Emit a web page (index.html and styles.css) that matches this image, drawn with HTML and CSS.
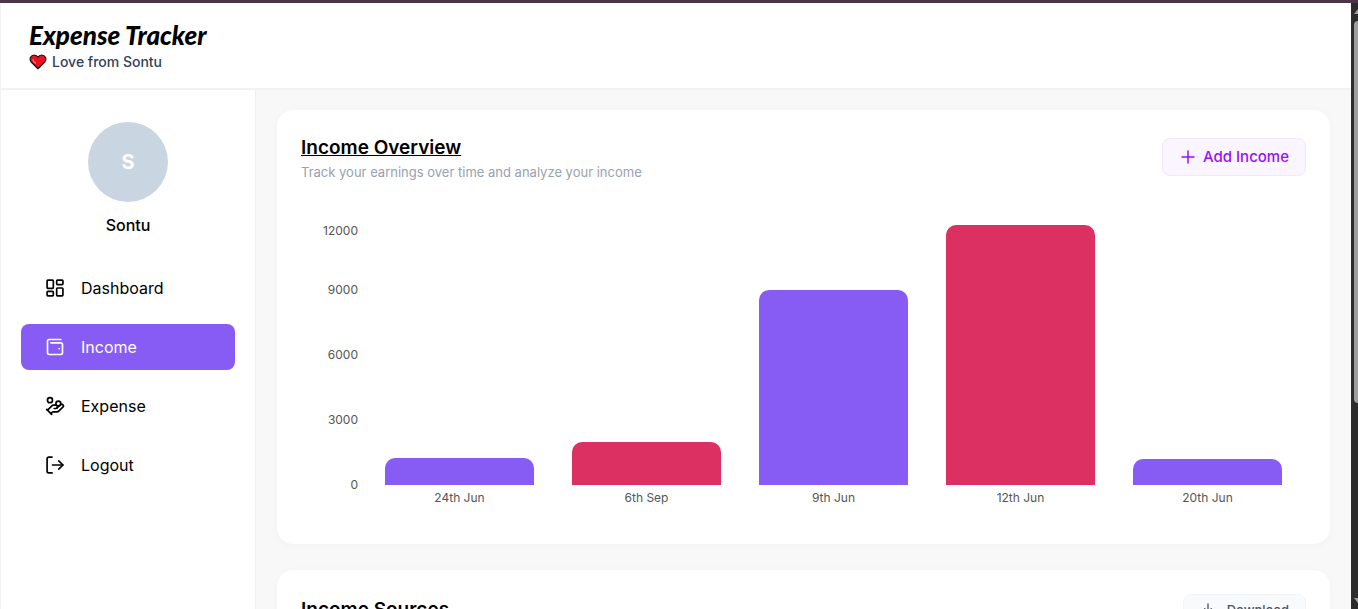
FILE: index.html
```html
<!DOCTYPE html>
<html lang="en">
<head>
<meta charset="utf-8">
<meta name="viewport" content="width=device-width, initial-scale=1">
<title>Expense Tracker</title>
<link rel="stylesheet" href="styles.css">
</head>
<body>
<div class="window">
  <div class="app">
    <header class="topbar">
      <h1 class="brand">Expense Tracker</h1>
      <p class="tagline">
        <svg class="heart" viewBox="0 0 17 16" aria-hidden="true"><path d="M8.500 14.700 1.700 8C-.7 4.700 1.500 1 4.700 1c1.700 0 3 .8 3.800 2.300C9.300 1.800 10.600 1 12.300 1c3.200 0 5.400 3.700 3 7z" fill="#e81224" stroke="#111" stroke-width="1.200" stroke-linejoin="round"/><path d="M3.300 5.200c.2 2 1.500 3.300 3 4.300" fill="none" stroke="#ff7a6b" stroke-width="1.300"/></svg>
        <span>Love from Sontu</span>
      </p>
    </header>
    <div class="body">
      <aside class="sidebar">
        <div class="avatar">S</div>
        <p class="user">Sontu</p>
        <nav class="nav">
          <a class="nav-item" href="#dashboard">
            <svg class="icon" viewBox="0 0 24 24" aria-hidden="true"><rect x="2.500" y="2.500" width="7.500" height="10" rx="1"/><rect x="14" y="2.500" width="7.500" height="5.500" rx="1"/><rect x="14" y="12" width="7.500" height="9.500" rx="1"/><rect x="2.500" y="16" width="7.500" height="5.500" rx="1"/></svg>
            Dashboard</a>
          <a class="nav-item active" href="#income" aria-current="page">
            <svg class="icon" viewBox="0 0 24 24" aria-hidden="true"><path d="M17 14h.01"/><path d="M7 7h12a2 2 0 0 1 2 2v10a2 2 0 0 1-2 2H5a2 2 0 0 1-2-2V5a2 2 0 0 1 2-2h14"/></svg>
            Income</a>
          <a class="nav-item" href="#expense">
            <svg class="icon" viewBox="0 0 24 24" aria-hidden="true"><path d="M11 15h2a2 2 0 1 0 0-4h-3c-.6 0-1.100.2-1.400.6L3 17"/><path d="m7 21 1.600-1.400c.3-.4.8-.6 1.400-.6h4c1.100 0 2.100-.4 2.800-1.200l4.600-4.400a2 2 0 0 0-2.750-2.910l-4.200 3.900"/><path d="m2 16 6 6"/><circle cx="16" cy="9" r="2.900"/><circle cx="6" cy="5" r="3"/></svg>
            Expense</a>
          <a class="nav-item" href="#logout">
            <svg class="icon" viewBox="0 0 24 24" aria-hidden="true"><path d="M8.500 21.500H4.500a2 2 0 0 1-2-2v-15a2 2 0 0 1 2-2h4"/><path d="m16.500 17 5-5-5-5"/><path d="M21.500 12H9"/></svg>
            Logout</a>
        </nav>
      </aside>
      <main class="content">
        <section class="card">
          <div class="card-head">
            <div>
              <h2 class="card-title underlined">Income Overview</h2>
              <p class="card-note">Track your earnings over time and analyze your income</p>
            </div>
            <button class="btn btn-add" type="button">
              <svg class="btn-icon" viewBox="0 0 24 24" aria-hidden="true"><path d="M4 12h16M12 4v16"/></svg>
              Add Income</button>
          </div>
          <div class="chart">
            <div class="y-axis"><span>12000</span><span>9000</span><span>6000</span><span>3000</span><span>0</span></div>
            <div class="plot">
              <div class="bars">
                <div class="bar" style="height:10.4%"></div>
                <div class="bar alt" style="height:16.7%"></div>
                <div class="bar" style="height:75%"></div>
                <div class="bar alt" style="height:100%"></div>
                <div class="bar" style="height:10%"></div>
              </div>
              <div class="x-axis"><span>24th Jun</span><span>6th Sep</span><span>9th Jun</span><span>12th Jun</span><span>20th Jun</span></div>
            </div>
          </div>
        </section>
        <section class="card">
          <div class="card-head centered">
            <h2 class="card-title">Income Sources</h2>
            <button class="btn btn-download" type="button">
              <svg class="btn-icon" viewBox="0 0 24 24" aria-hidden="true"><path d="M21 15v4a2 2 0 0 1-2 2H5a2 2 0 0 1-2-2v-4M7 10l5 5 5-5M12 15V3"/></svg>
              Download</button>
          </div>
        </section>
      </main>
    </div>
  </div>
  <div class="scrollbar" aria-hidden="true">
    <span class="arrow up"></span>
    <span class="thumb"></span>
    <span class="arrow down"></span>
  </div>
</div>
</body>
</html>
```
FILE: styles.css
```css
* { box-sizing: border-box; }

body {
  margin: 0;
  font-family: Inter, "Open Sans", sans-serif;
  color: #000;
  background: #fff;
}

h1, h2, p { margin: 0; }

.window {
  display: flex;
  height: 100vh;
  overflow: hidden;
  border-top: 3px solid #4b3546;
}

.app {
  flex: 1;
  min-width: 0;
  display: flex;
  flex-direction: column;
  border-left: 1px solid #f2f2f2;
}

.topbar {
  padding: 16px 28px;
  border-bottom: 2px solid #f2f2f2;
}

.brand {
  font-family: Lato, sans-serif;
  font-size: 26px;
  font-weight: 900;
  font-style: italic;
  line-height: 33px;
}

.tagline {
  display: flex;
  align-items: center;
  gap: 5px;
  font-size: 14px;
  font-weight: 500;
  line-height: 20px;
  color: #314158;
}

.heart { width: 18px; height: 16px; }

.body {
  flex: 1;
  min-height: 0;
  display: flex;
}

.sidebar {
  flex: none;
  width: 255px;
  padding: 32px 20px 20px;
  border-right: 1px solid #f0f0f0;
}

.avatar {
  display: grid;
  place-items: center;
  width: 80px;
  height: 80px;
  margin: 0 auto;
  border-radius: 50%;
  background: #cad5e2;
  color: #fff;
  font-size: 20px;
  font-weight: 700;
}

.user {
  margin: 11px 0 28px;
  text-align: center;
  font-size: 16px;
  font-weight: 500;
  line-height: 24px;
}

.nav {
  display: flex;
  flex-direction: column;
  gap: 13px;
}

.nav-item {
  display: flex;
  align-items: center;
  gap: 16px;
  padding: 11px 24px;
  border-radius: 8px;
  color: #000;
  font-size: 16px;
  line-height: 24px;
  text-decoration: none;
}

.nav-item.active { background: #875cf5; color: #fff; }

.icon, .btn-icon {
  flex: none;
  fill: none;
  stroke: currentColor;
  stroke-width: 2;
  stroke-linecap: round;
  stroke-linejoin: round;
}

.icon { width: 20px; height: 20px; }

.content {
  flex: 1;
  min-width: 0;
  padding: 20px 21px 0;
  background: #f8f8f8;
  overflow: hidden;
}

.card {
  margin-bottom: 26px;
  padding: 24px 24px 36px;
  border-radius: 16px;
  background: #fff;
  box-shadow: 0 1px 6px #f0f1f4;
}

.card-head {
  display: flex;
  justify-content: space-between;
  align-items: flex-start;
}

.card-head.centered { align-items: center; }

.card-title {
  font-size: 19px;
  font-weight: 600;
  line-height: 28px;
}

.underlined { text-decoration: underline; }

.card-note {
  font-size: 13px;
  line-height: 20px;
  color: #99a1af;
}

.btn {
  display: flex;
  align-items: center;
  padding: 8px 16px;
  border: 1px solid;
  border-radius: 8px;
  font-family: inherit;
  font-weight: 500;
  line-height: 20px;
}

.btn-icon { width: 18px; height: 18px; }

.btn-add {
  gap: 6px;
  margin-top: 4px;
  border-color: #f3e8ff;
  background: #faf5ff;
  color: #9810fa;
  font-size: 15px;
}

.btn-download {
  gap: 11px;
  padding: 5px 16px;
  border-color: #f1f5f9;
  background: #f9fafb;
  color: #4a5565;
  font-size: 13px;
}

.btn-download .btn-icon { width: 16px; height: 16px; }

.chart {
  display: flex;
  gap: 8px;
  margin-top: 43px;
  padding-right: 5px;
  font-size: 12px;
  color: #555;
}

.y-axis {
  display: grid;
  grid-template-rows: 12px 59px 65px 65px 65px;
  align-items: end;
  width: 57px;
  line-height: 12px;
  text-align: right;
}

.plot { flex: 1; }

.bars {
  display: grid;
  grid-template-columns: repeat(5, 1fr);
  align-items: end;
  height: 260px;
}

.bar {
  width: 80%;
  margin: 0 auto;
  border-radius: 10px 10px 0 0;
  background: #875cf5;
}

.bar.alt { background: #dd3062; }

.x-axis {
  display: grid;
  grid-template-columns: repeat(5, 1fr);
  padding-top: 3px;
  line-height: 20px;
  text-align: center;
}

.scrollbar {
  flex: none;
  display: flex;
  flex-direction: column;
  align-items: flex-end;
  width: 7px;
  padding: 6px 0;
  background: #2c2c2c;
}

.thumb {
  width: 4px;
  height: 382px;
  margin: 7px 0 auto;
  border-radius: 4px 0 0 4px;
  background: #9f9f9f;
}

.arrow {
  border-left: 4px solid transparent;
}

.arrow.up { border-bottom: 5px solid #9f9f9f; }

.arrow.down { border-top: 5px solid #9f9f9f; }
```
